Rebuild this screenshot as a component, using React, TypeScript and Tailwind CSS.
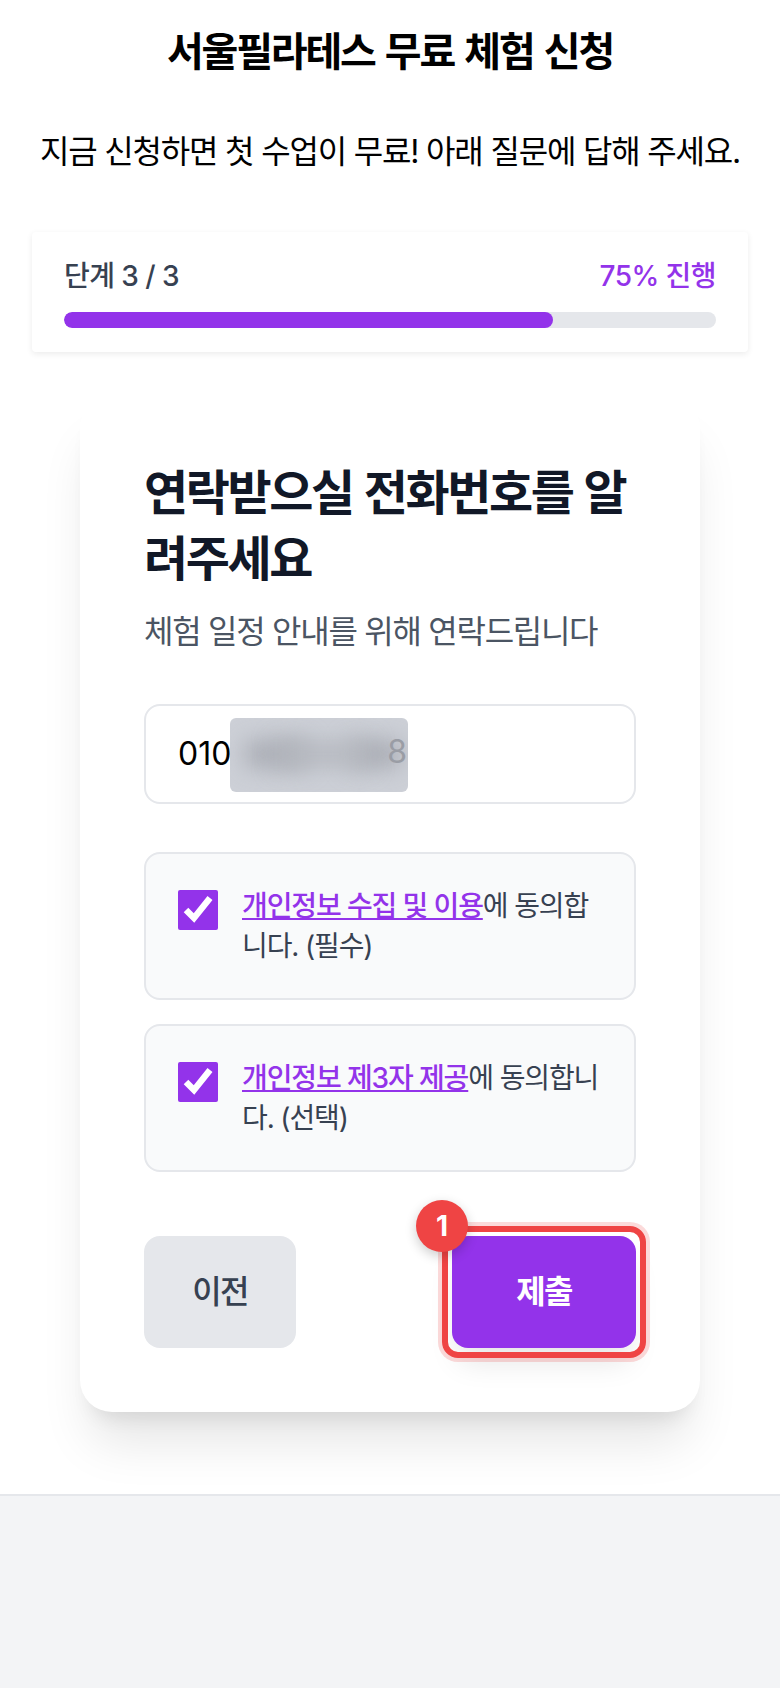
export default function App() {
  return (
    <div className="min-h-[1688px] w-[780px] bg-white font-['Inter','Noto_Sans_CJK_KR',sans-serif] flex flex-col">
      <div className="px-8 pt-6 h-[1494px]">
        <h1 className="text-[40px] leading-[56px] font-bold tracking-[-0.055em] [word-spacing:3px] text-black text-center">서울필라테스 무료 체험 신청</h1>
        <p className="mt-[48px] text-[32px] leading-[48px] tracking-[-0.037em] text-black text-center whitespace-nowrap">지금 신청하면 첫 수업이 무료! 아래 질문에 답해 주세요.</p>
        <div className="mt-[56px] bg-white shadow-[0_2px_6px_rgba(0,0,0,0.08)] rounded px-8 pt-6 pb-6">
          <div className="flex justify-between items-center">
            <span className="text-[28px] leading-[40px] font-medium tracking-[-0.02em] text-[#374151]">단계 3 / 3</span>
            <span className="text-[28px] leading-[40px] font-medium tracking-[-0.02em] text-[#9333ea]">75% 진행</span>
          </div>
          <div className="mt-4 h-4 rounded-full bg-[#e5e7eb] overflow-hidden">
            <div className="h-4 w-3/4 rounded-full bg-[#9333ea]" />
          </div>
        </div>
        <div className="mt-[44px] mx-12 rounded-[32px] bg-white shadow-[0_40px_50px_-10px_rgba(0,0,0,0.1),0_16px_20px_-12px_rgba(0,0,0,0.1)] p-16">
          <h2 className="text-[48px] leading-[66px] font-bold tracking-[-0.05em] [word-spacing:2px] text-[#111827]">연락받으실 전화번호를 알려주세요</h2>
          <p className="mt-4 text-[32px] leading-[48px] tracking-[-0.04em] text-[#4b5563]">체험 일정 안내를 위해 연락드립니다</p>
          <div className="relative mt-12 h-[100px] rounded-2xl border-2 border-[#e5e7eb] bg-white px-8 flex items-center">
            <span className="text-[32px] text-black">010</span>
            <div className="absolute left-[84px] top-3 w-[178px] h-[74px] rounded-md bg-[#cdd0d7] overflow-hidden">
              <div className="absolute left-4 top-6 w-[60px] h-6 bg-[#a3a6ae] blur-md" />
              <div className="absolute left-[120px] top-6 w-[50px] h-6 bg-[#a3a6ae] blur-md" />
              <div className="absolute left-12 top-6 w-[90px] h-6 bg-[#b4b7be] blur-md" />
              <span className="absolute right-[1px] top-[10px] text-[32px] text-[#9a9da5]">8</span>
            </div>
          </div>
          <div className="mt-12 flex flex-col gap-6">
            <label className="flex gap-6 rounded-2xl border-2 border-[#e5e7eb] bg-[#f9fafb] p-8 h-[148px]">
              <input type="checkbox" defaultChecked className="mt-1 w-10 h-10 shrink-0 accent-[#9333ea]" />
              <span className="text-[28px] leading-[40px] tracking-[-0.04em] text-[#374151]"><a className="font-medium text-[#9333ea] underline">개인정보 수집 및 이용</a>에 동의합니다. (필수)</span>
            </label>
            <label className="flex gap-6 rounded-2xl border-2 border-[#e5e7eb] bg-[#f9fafb] p-8 h-[148px]">
              <input type="checkbox" defaultChecked className="mt-1 w-10 h-10 shrink-0 accent-[#9333ea]" />
              <span className="text-[28px] leading-[40px] tracking-[-0.04em] text-[#374151]"><a className="font-medium text-[#9333ea] underline">개인정보 제3자 제공</a>에 동의합니다. (선택)</span>
            </label>
          </div>
          <div className="mt-16 flex justify-between">
            <button className="w-[152px] h-28 rounded-2xl bg-[#e5e7eb] text-[32px] font-medium tracking-[-0.05em] text-[#374151]">이전</button>
            <div className="relative">
              <button className="w-[184px] h-28 rounded-2xl bg-[#9333ea] text-[32px] font-bold tracking-[-0.05em] text-white shadow-[0_20px_30px_-6px_rgba(0,0,0,0.1)]">제출</button>
              <div className="absolute -inset-[10px] rounded-[16px] border-[6px] border-[#ef4444] shadow-[0_0_0_4px_rgba(239,68,68,0.2)] pointer-events-none" />
              <div className="absolute -left-9 -top-9 w-[52px] h-[52px] rounded-full bg-[#ef4444] text-white text-[28px] font-bold flex items-center justify-center shadow-[0_4px_12px_rgba(0,0,0,0.2)]">1</div>
            </div>
          </div>
        </div>
      </div>
      <div className="flex-1 bg-[#f3f4f6] border-t-2 border-[#e5e7eb]" />
    </div>
  );
}
